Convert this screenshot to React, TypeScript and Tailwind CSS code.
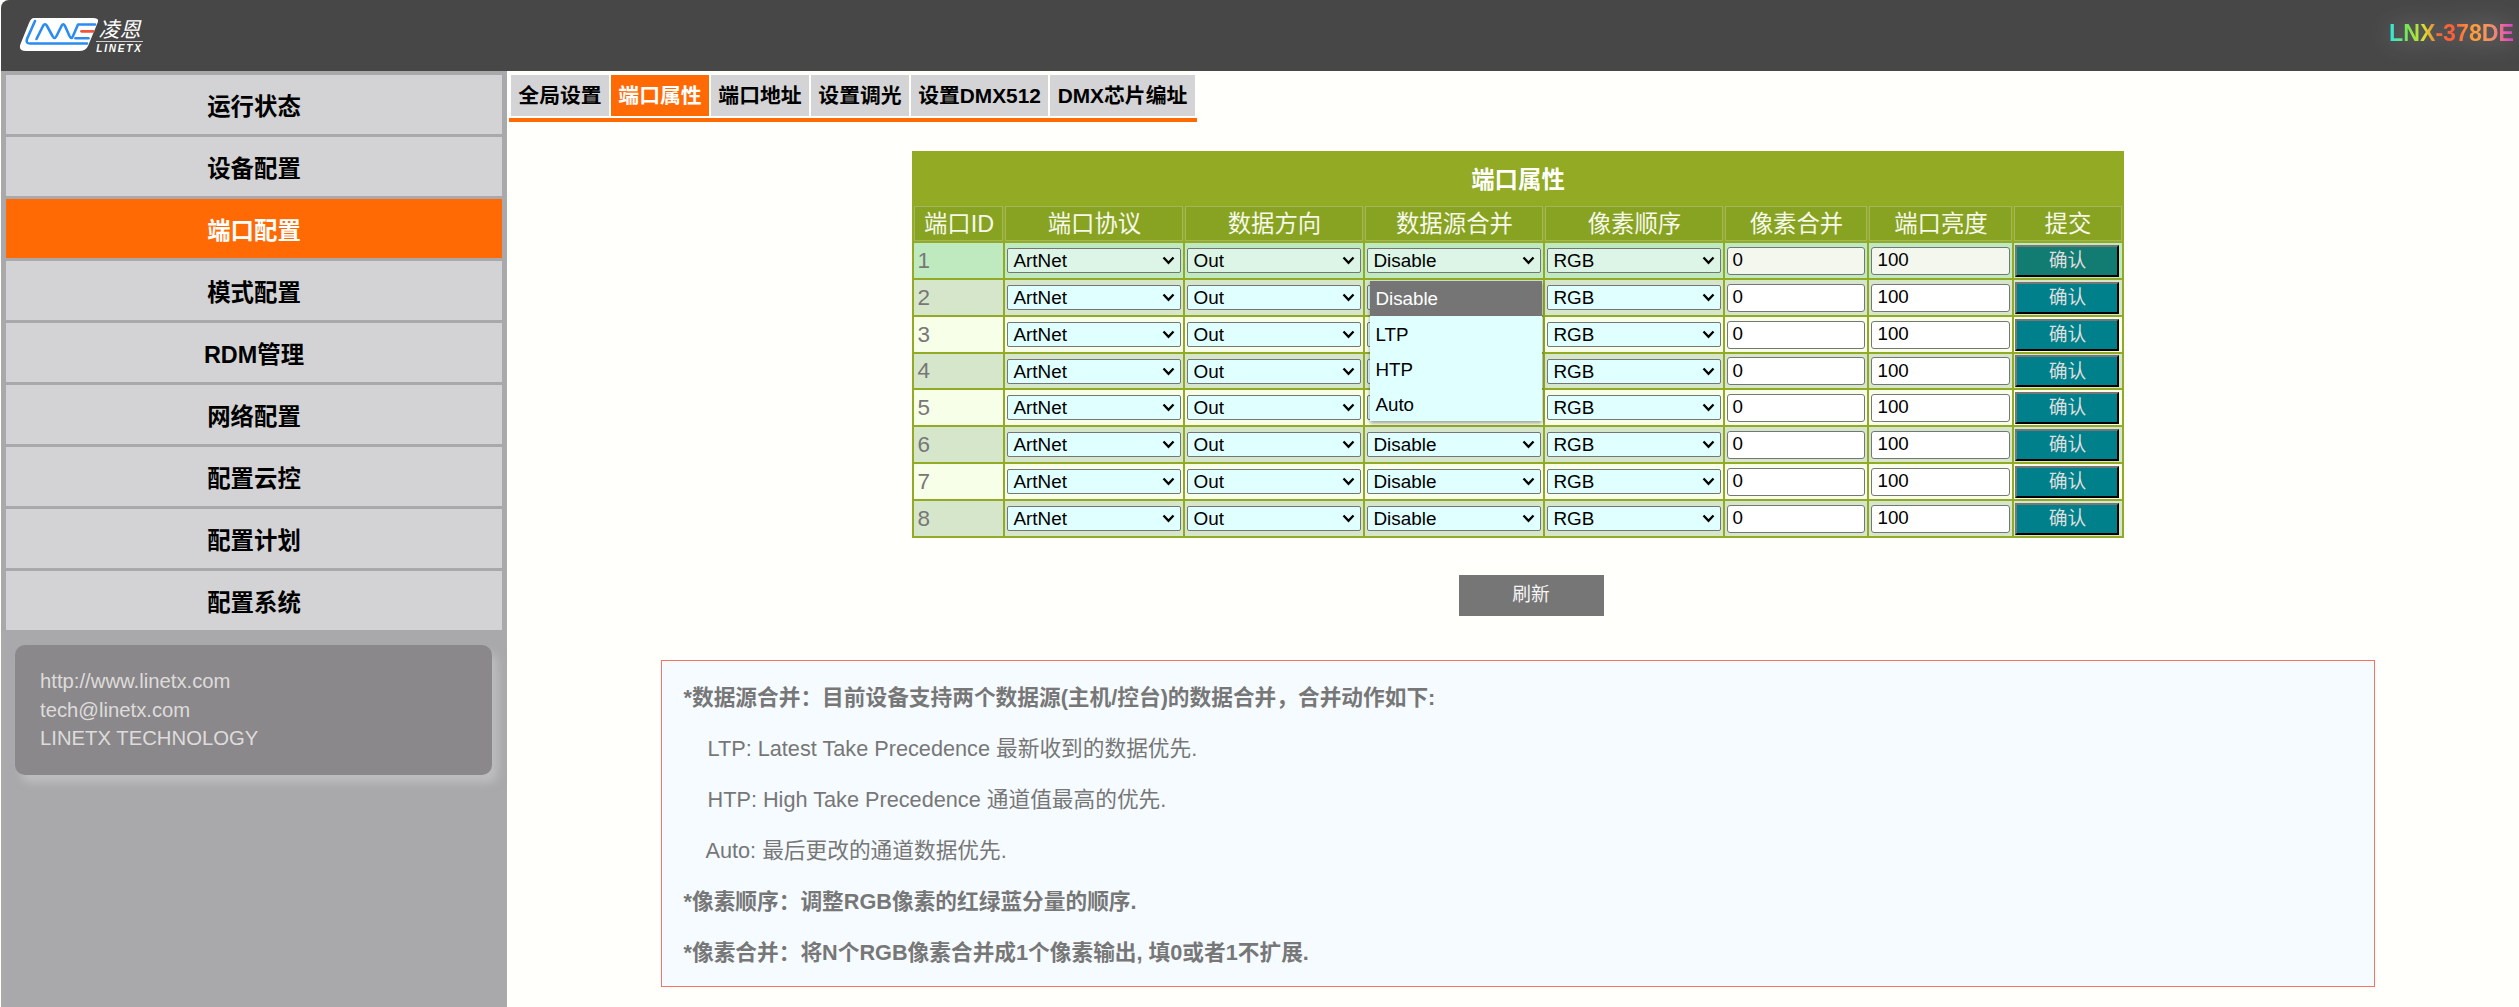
import React from "react";

const menu = ["运行状态", "设备配置", "端口配置", "模式配置", "RDM管理", "网络配置", "配置云控", "配置计划", "配置系统"];
const tabs = [
  { t: "全局设置", w: "w-[98px]" },
  { t: "端口属性", w: "w-[98px]" },
  { t: "端口地址", w: "w-[98px]" },
  { t: "设置调光", w: "w-[98px]" },
  { t: "设置DMX512", w: "w-[137px]" },
  { t: "DMX芯片编址", w: "w-[145px]" },
];
const heads = ["端口ID", "端口协议", "数据方向", "数据源合并", "像素顺序", "像素合并", "端口亮度", "提交"];

const rows = [
  { id: 1, cell: "bg-[#bfeac0]", sel: "bg-[#ddf5e6]", inp: "bg-[#f3f7ee]", btn: "bg-[#127b72]", h: "h-[35px]" },
  { id: 2, cell: "bg-[#d6e6cb]", sel: "bg-[#e0ffff]", inp: "bg-white", btn: "bg-[#00808a]", h: "h-[35px]" },
  { id: 3, cell: "bg-[#f8ffe9]", sel: "bg-[#e0ffff]", inp: "bg-white", btn: "bg-[#00808a]", h: "h-[35px]" },
  { id: 4, cell: "bg-[#d6e6cb]", sel: "bg-[#e0ffff]", inp: "bg-white", btn: "bg-[#00808a]", h: "h-[34px]" },
  { id: 5, cell: "bg-[#f8ffe9]", sel: "bg-[#e0ffff]", inp: "bg-white", btn: "bg-[#00808a]", h: "h-[35px]" },
  { id: 6, cell: "bg-[#d6e6cb]", sel: "bg-[#e0ffff]", inp: "bg-white", btn: "bg-[#00808a]", h: "h-[35px]" },
  { id: 7, cell: "bg-[#f8ffe9]", sel: "bg-[#e0ffff]", inp: "bg-white", btn: "bg-[#00808a]", h: "h-[35px]" },
  { id: 8, cell: "bg-[#d6e6cb]", sel: "bg-[#e0ffff]", inp: "bg-white", btn: "bg-[#00808a]", h: "h-[35px]" },
];

function Sel({ value, options, bg }: { value: string; options: string[]; bg: string }) {
  return (
    <div className="relative mx-[2px] h-[25px]">
      <select
        defaultValue={value}
        className={`block h-[25px] w-full appearance-none rounded-[2px] border border-[#767676] pl-[5px] text-[18.9px] leading-[23px] text-black outline-none ${bg}`}
      >
        {options.map((o) => (
          <option key={o}>{o}</option>
        ))}
      </select>
      <svg className="pointer-events-none absolute right-[6px] top-[8px]" width="13" height="9" viewBox="0 0 13 9">
        <path d="M1.5 1.5 L6.5 6.8 L11.5 1.5" fill="none" stroke="#000" strokeWidth="2.3" />
      </svg>
    </div>
  );
}

function Logo() {
  return (
    <div className="ml-[18px] flex items-start">
      <svg width="80" height="33" viewBox="0 0 80 33">
        <path d="M15 0 H74 Q81 0 78.5 5 L69 28 Q67 33 60 33 H7 Q-1 33 1.5 26 L10 5 Q12 0 15 0 Z" fill="#fff" />
        <path d="M16 3 L8 21 Q6.500 25.500 11 25.500 H68" fill="none" stroke="#2a8cf0" strokeWidth="2.6" strokeLinecap="round" />
        <path
          d="M17.500 21 L24 8 Q26 4.500 28 8 L33.500 18 Q35.500 22 37.500 18 L42.500 8 Q44.500 4.500 46 8 L50.500 18 Q52.500 22 54 18 L59 6.500 H76"
          fill="none"
          stroke="#2a8cf0"
          strokeWidth="2.6"
          strokeLinecap="round"
          strokeLinejoin="round"
        />
        <path d="M62.500 13.300 H74" stroke="#f0553a" strokeWidth="2.800" strokeLinecap="round" />
        <path d="M56.500 20.300 H69.500" stroke="#2a8cf0" strokeWidth="2.600" strokeLinecap="round" />
      </svg>
      <div className="ml-[-3px] flex w-[47px] flex-col items-center text-white">
        <div className="h-[23px] text-[21px] italic leading-[23px]">凌恩</div>
        <div className="h-px w-[47px] bg-[#cfcfcf]" />
        <div className="mt-[1px] text-[10px] font-bold italic leading-[11px] tracking-[1.8px]">LINETX</div>
      </div>
    </div>
  );
}

export default function App() {
  return (
    <div
      className="flex h-[1007px] w-[2519px] flex-col overflow-hidden bg-[#fffffb] pl-px text-black"
      style={{ fontFamily: '"Liberation Sans","Noto Sans CJK SC",sans-serif' }}
    >
      <header className="flex h-[71px] shrink-0 items-center justify-between rounded-tl-lg bg-[#474747]">
        <Logo />
        <div
          className="mr-[5px] mb-[6px] bg-clip-text text-[23.2px] font-bold leading-[28px] text-transparent drop-shadow-[0_0_12px_rgba(255,255,255,0.32)]"
          style={{
            backgroundImage:
              "linear-gradient(90deg,#2fe6e6 0%,#7ee84a 16%,#d8e030 28%,#f2683a 40%,#ff5f3a 52%,#ffa03a 68%,#f08a70 84%,#e03cd0 100%)",
          }}
        >
          LNX-378DE
        </div>
      </header>
      <div className="flex min-h-0 flex-1">
        <aside className="flex w-[506px] shrink-0 flex-col bg-[#a9a8aa] px-[5px] pt-[4px]">
          {menu.map((m, i) => (
            <div
              key={m}
              className={
                i === 2
                  ? "mb-[3px] flex h-[59px] items-center justify-center bg-[#ff6a05] pt-[7px] text-[23.4px] font-bold text-white"
                  : "mb-[3px] flex h-[59px] items-center justify-center bg-[#d3d2d4] pt-[7px] text-[23.4px] font-bold text-black"
              }
            >
              {m}
            </div>
          ))}
          <div className="ml-[9px] mt-[12px] h-[130px] w-[477px] rounded-[10px] bg-[#8a888b] px-[25px] py-[22px] text-[20.3px] leading-[28.7px] text-[#dedcda] shadow-[6px_8px_8px_rgba(205,205,207,0.55)]">
            <div>http://www.linetx.com</div>
            <div>tech@linetx.com</div>
            <div>LINETX TECHNOLOGY</div>
          </div>
        </aside>
        <main className="flex min-w-0 flex-1 flex-col pt-[4px]">
          <div className="ml-[2px] flex w-[688px] gap-[2px] border-b-[4px] border-[#ff6a05] pb-[2px] pl-[2px]">
            {tabs.map((t, i) => (
              <div
                key={t.t}
                className={
                  i === 1
                    ? `flex h-[41px] items-center justify-center bg-[#ff6a05] pt-[1px] text-[20.83px] font-bold text-white ${t.w}`
                    : `flex h-[41px] items-center justify-center bg-[#d4d3d5] pt-[1px] text-[20.83px] font-bold text-black ${t.w}`
                }
              >
                {t.t}
              </div>
            ))}
          </div>
          <div className="flex flex-col items-center pl-[10px]">
            <table className="mt-[29px] w-[1211px] table-fixed border-separate border-spacing-[2px] bg-[#92aa24]">
              <colgroup>
                <col className="w-[89px]" />
                <col className="w-[178px]" />
                <col className="w-[178px]" />
                <col className="w-[178px]" />
                <col className="w-[178px]" />
                <col className="w-[142px]" />
                <col className="w-[143px]" />
                <col className="w-[107px]" />
              </colgroup>
              <thead>
                <tr>
                  <th colSpan={8} className="h-[51px] p-0 pt-[4px] text-center text-[23.4px] font-bold text-white">
                    端口属性
                  </th>
                </tr>
                <tr>
                  {heads.map((h) => (
                    <th
                      key={h}
                      className="h-[35px] border border-[#a2b65c] bg-[#88a322] p-0 text-center text-[23.4px] font-normal leading-[28px] text-[#f6f8ea]"
                    >
                      {h}
                    </th>
                  ))}
                </tr>
              </thead>
              <tbody>
                {rows.map((r) => (
                  <tr key={r.id} className={r.h}>
                    <td className={`p-0 pl-[3px] text-[22.5px] leading-[26px] text-[#777] ${r.cell}`}>{r.id}</td>
                    <td className={`p-0 ${r.cell}`}>
                      <Sel value="ArtNet" options={["ArtNet", "sACN"]} bg={r.sel} />
                    </td>
                    <td className={`p-0 ${r.cell}`}>
                      <Sel value="Out" options={["Out", "In"]} bg={r.sel} />
                    </td>
                    <td className={`relative p-0 ${r.cell}`}>
                      <Sel value="Disable" options={["Disable", "LTP", "HTP", "Auto"]} bg={r.sel} />
                      {r.id === 1 && (
                        <div className="absolute left-[5px] top-[38px] z-10 w-[172px] bg-[#e0ffff] text-[18.75px] leading-[35px] text-black shadow-[0_2px_4px_rgba(0,0,0,0.4)]">
                          <div className="h-[35px] bg-[#757575] pl-[5px] text-white">Disable</div>
                          <div className="h-[35px] pl-[5px] pt-[1px]">LTP</div>
                          <div className="h-[35px] pl-[5px] pt-[1px]">HTP</div>
                          <div className="h-[35px] pl-[5px] pt-[1px]">Auto</div>
                        </div>
                      )}
                    </td>
                    <td className={`p-0 ${r.cell}`}>
                      <Sel value="RGB" options={["RGB", "RBG", "GRB", "GBR", "BRG", "BGR"]} bg={r.sel} />
                    </td>
                    <td className={`p-0 ${r.cell}`}>
                      <input
                        readOnly
                        value="0"
                        className={`mx-[2px] block h-[28px] w-[138px] rounded-[3px] border border-[#767676] pl-[4px] text-[18.75px] text-black outline-none ${r.inp}`}
                      />
                    </td>
                    <td className={`p-0 ${r.cell}`}>
                      <input
                        readOnly
                        value="100"
                        className={`mx-[2px] block h-[28px] w-[139px] rounded-[3px] border border-[#767676] pl-[5px] text-[18.75px] text-black outline-none ${r.inp}`}
                      />
                    </td>
                    <td className={`p-0 ${r.cell}`}>
                      <div
                        className={`mx-[1px] flex h-[32px] w-[104px] items-center justify-center border-2 border-b-black border-l-[#767676] border-r-black border-t-[#767676] pt-[1px] text-[18.75px] leading-[24px] text-[#dedede] ${r.btn}`}
                      >
                        确认
                      </div>
                    </td>
                  </tr>
                ))}
              </tbody>
            </table>
            <button className="ml-[26px] mt-[37px] flex h-[41px] w-[145px] items-center justify-center bg-[#777676] text-[18.75px] text-[#f4f4f4]">
              刷新
            </button>
            <div className="ml-[-1px] mt-[44px] h-[327px] w-[1714px] border border-[#f77465] bg-[#f5fbff] pl-[22px] pt-[11px] text-[21.7px] leading-[51px] text-[#777]">
              <div className="font-bold">*数据源合并：目前设备支持两个数据源(主机/控台)的数据合并，合并动作如下:</div>
              <div className="pl-[24px]">LTP: Latest Take Precedence 最新收到的数据优先.</div>
              <div className="pl-[24px]">HTP: High Take Precedence 通道值最高的优先.</div>
              <div className="pl-[22px]">Auto: 最后更改的通道数据优先.</div>
              <div className="font-bold">*像素顺序：调整RGB像素的红绿蓝分量的顺序.</div>
              <div className="font-bold">*像素合并：将N个RGB像素合并成1个像素输出, 填0或者1不扩展.</div>
            </div>
          </div>
        </main>
      </div>
    </div>
  );
}
